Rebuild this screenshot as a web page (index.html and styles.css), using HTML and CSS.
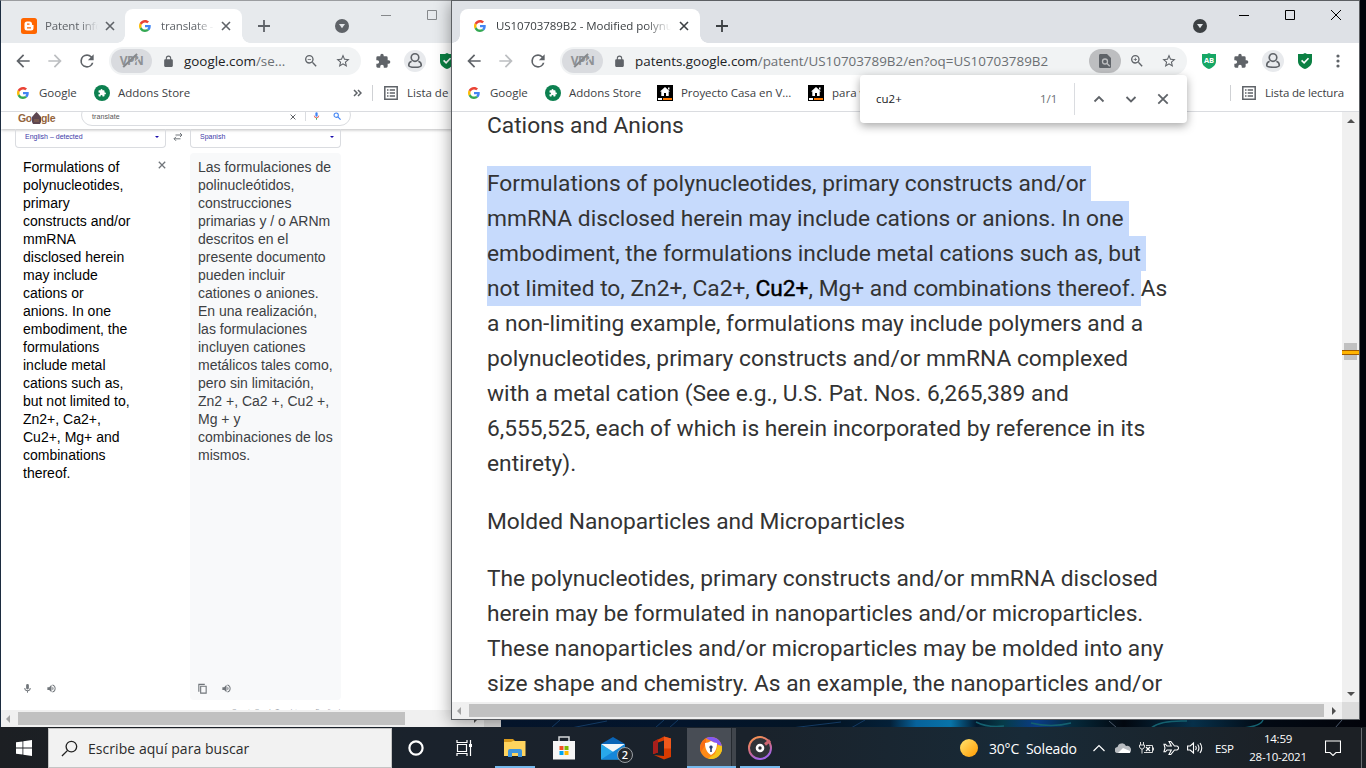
FILE: index.html
```html
<!DOCTYPE html>
<html lang="es">
<head>
    <meta charset="UTF-8">
    <meta name="viewport" content="width=device-width, initial-scale=1.0">
    <title>Escritorio</title>
    <link rel="stylesheet" href="styles.css">
</head>
<body>

    <!-- Iconos compartidos por las dos ventanas -->
    <svg class="sprite" width="0" height="0">
        <symbol id="g" viewBox="0 0 48 48">
            <path fill="#ea4335" d="M24 9.5c3.54 0 6.71 1.22 9.21 3.6l6.85-6.85C35.9 2.38 30.47 0 24 0 14.62 0 6.51 5.38 2.56 13.22l7.98 6.19C12.43 13.72 17.74 9.5 24 9.5z"/>
            <path fill="#4285f4" d="M46.98 24.55c0-1.57-.15-3.09-.38-4.55H24v9.02h12.94c-.58 2.96-2.26 5.48-4.78 7.18l7.73 6c4.51-4.18 7.09-10.36 7.09-17.65z"/>
            <path fill="#fbbc05" d="M10.53 28.59A14.5 14.5 0 0 1 9.77 24c0-1.6.27-3.14.76-4.59l-7.98-6.19A23.9 23.9 0 0 0 0 24c0 3.88.92 7.54 2.56 10.78l7.97-6.19z"/>
            <path fill="#34a853" d="M24 48c6.48 0 11.93-2.13 15.89-5.81l-7.73-6c-2.15 1.45-4.92 2.3-8.16 2.3-6.26 0-11.57-4.22-13.47-9.91l-7.98 6.19C6.51 42.62 14.62 48 24 48z"/>
        </symbol>
        <symbol id="x" viewBox="0 0 10 10"><path d="M1 1l8 8M9 1l-8 8" fill="none" stroke="currentColor" stroke-width="1.6"/></symbol>
        <symbol id="plus" viewBox="0 0 12 12"><path d="M6 0v12M0 6h12" fill="none" stroke="currentColor" stroke-width="1.8"/></symbol>
        <symbol id="drop" viewBox="0 0 14 14"><circle cx="7" cy="7" r="7" fill="currentColor"/><path d="M4 5h6L7 9.3z" fill="#e4e7ea"/></symbol>
        <symbol id="back" viewBox="0 0 24 24"><path fill="currentColor" d="M20 11H7.83l5.59-5.59L12 4l-8 8 8 8 1.41-1.41L7.83 13H20v-2z"/></symbol>
        <symbol id="forward" viewBox="0 0 24 24"><path fill="currentColor" d="M12 4l-1.41 1.41L16.17 11H4v2h12.17l-5.58 5.59L12 20l8-8z"/></symbol>
        <symbol id="reload" viewBox="0 0 24 24"><path fill="currentColor" d="M17.65 6.35A7.96 7.96 0 0 0 12 4a8 8 0 1 0 7.73 10h-2.08A6 6 0 1 1 12 6c1.66 0 3.14.69 4.22 1.78L13 11h7V4l-2.35 2.35z"/></symbol>
        <symbol id="lock" viewBox="0 0 24 24"><path fill="currentColor" d="M18 8h-1V6A5 5 0 0 0 7 6v2H6a2 2 0 0 0-2 2v10c0 1.1.9 2 2 2h12a2 2 0 0 0 2-2V10a2 2 0 0 0-2-2zm-9 0V6a3 3 0 0 1 6 0v2H9z"/></symbol>
        <symbol id="zoomout" viewBox="0 0 24 24"><path fill="currentColor" d="M15.5 14h-.79l-.28-.27A6.47 6.47 0 0 0 16 9.5 6.5 6.5 0 1 0 9.5 16c1.61 0 3.09-.59 4.23-1.57l.27.28v.79l5 4.99L20.49 19l-4.99-5zm-6 0a4.5 4.5 0 1 1 0-9 4.5 4.5 0 0 1 0 9zM7 9h5v1.2H7z"/></symbol>
        <symbol id="zoomin" viewBox="0 0 24 24"><path fill="currentColor" d="M15.5 14h-.79l-.28-.27A6.47 6.47 0 0 0 16 9.5 6.5 6.5 0 1 0 9.5 16c1.61 0 3.09-.59 4.23-1.57l.27.28v.79l5 4.99L20.49 19l-4.99-5zm-6 0a4.5 4.5 0 1 1 0-9 4.5 4.5 0 0 1 0 9zM10.1 7H8.9v1.9H7v1.2h1.9V12h1.2v-1.9H12V8.9h-1.9z"/></symbol>
        <symbol id="star" viewBox="0 0 24 24"><path fill="currentColor" d="M22 9.24l-7.19-.62L12 2 9.19 8.63 2 9.24l5.46 4.73L5.82 21 12 17.27 18.18 21l-1.63-7.03L22 9.24zM12 15.4l-3.76 2.27 1-4.28-3.32-2.88 4.38-.38L12 6.1l1.71 4.04 4.38.38-3.32 2.88 1 4.28L12 15.4z"/></symbol>
        <symbol id="puzzle" viewBox="0 0 24 24"><path fill="currentColor" d="M20.5 11H19V7a2 2 0 0 0-2-2h-4V3.5a2.5 2.5 0 0 0-5 0V5H4a2 2 0 0 0-2 2v3.8h1.5a2.7 2.7 0 0 1 0 5.4H2V20c0 1.1.9 2 2 2h3.8v-1.5a2.7 2.7 0 0 1 5.4 0V22H17a2 2 0 0 0 2-2v-4h1.5a2.5 2.5 0 0 0 0-5z"/></symbol>
        <symbol id="avatar" viewBox="0 0 22 22"><circle cx="11" cy="11" r="11" fill="#e8eaed"/><g fill="none" stroke="#5f6368" stroke-width="1.6"><circle cx="11" cy="7.6" r="3.8"/><path d="M7.6 11.2C5.3 12 4.7 13.6 4.7 15.3C4.7 17 6.2 17.3 11 17.3S17.3 17 17.3 15.3C17.3 13.6 16.7 12 14.4 11.2"/></g></symbol>
        <symbol id="shield" viewBox="0 0 14 16"><path fill="#0b8043" d="M7 0l2 1h5v7c0 4-3 6.5-7 8-4-1.5-7-4-7-8V1h5z"/><path d="M3.6 7.4l2.5 2.5 4.4-4.7" fill="none" stroke="#fff" stroke-width="1.6"/></symbol>
        <symbol id="addons" viewBox="0 0 16 16"><circle cx="8" cy="8" r="8" fill="#0d8050"/><use href="#puzzle" x="3.8" y="3.6" width="8.5" height="8.5" color="#fff"/></symbol>
        <symbol id="house" viewBox="0 0 16 16"><path d="M0 0h16v16H0z"/><path fill="#fff" d="M8 2l5 4.500h-1.300V11H9V8H7v3H4.300V6.500H3zM11 2.500h1.500v2H11zM1 13h4v2H1z"/><path fill="#ff7a00" d="M6 13h9v2H6z"/></symbol>
        <symbol id="list" viewBox="0 0 14 14"><path d="M.8.8h12.400v12.400H.8z" fill="none" stroke="currentColor" stroke-width="1.5"/><path d="M3 4h1.500M3 7h1.500M3 10h1.500M5.700 4H11M5.700 7H11M5.700 10H11" stroke="currentColor" stroke-width="1.4"/></symbol>
        <symbol id="mic" viewBox="0 0 24 24"><path fill="currentColor" d="M12 14a3 3 0 0 0 3-3V5a3 3 0 0 0-6 0v6a3 3 0 0 0 3 3zm5-3a5 5 0 0 1-10 0H5a7 7 0 0 0 6 6.92V21h2v-3.080A7 7 0 0 0 19 11h-2z"/></symbol>
        <symbol id="speaker" viewBox="0 0 24 24"><path fill="currentColor" d="M3 9v6h4l5 5V4L7 9H3zm13.500 3A4.500 4.500 0 0 0 14 7.970v8.050A4.470 4.470 0 0 0 16.500 12zM14 3.230v2.060a7 7 0 0 1 0 13.420v2.060a9 9 0 0 0 0-17.540z"/></symbol>
    </svg>

    <div class="desktop">

        <!-- Ventana izquierda: traductor -->
        <div class="window window-left">
            <div class="tabstrip">
                <div class="tab tab-idle">
                    <svg class="blogger" viewBox="0 0 16 16"><rect width="16" height="16" rx="2.5" fill="#ff6600"/><path d="M6 3.500h2.500a2.500 2.500 0 0 1 2.500 2.500c0 1 .2 1 1.500 1v3a2.500 2.500 0 0 1-2.500 2.500H6A2.500 2.500 0 0 1 3.500 10V6A2.500 2.500 0 0 1 6 3.500z" fill="#fff"/><path d="M6 6.200h2.500M6 9.800h4" stroke="#ff6600" stroke-width="1.3"/></svg>
                    <span class="tab-title">Patent info</span>
                    <svg class="tab-x"><use href="#x"/></svg>
                </div>
                <div class="tab tab-open">
                    <svg class="fav"><use href="#g"/></svg>
                    <span class="tab-title">translate -</span>
                    <svg class="tab-x"><use href="#x"/></svg>
                </div>
                <svg class="new-tab"><use href="#plus"/></svg>
                <svg class="tab-search"><use href="#drop"/></svg>
                <svg class="win-buttons" width="56" height="12" viewBox="0 0 56 12"><path d="M0 6.500h10M46.500 1.500h9v9h-9z" fill="none" stroke="currentColor"/></svg>
            </div>
            <div class="toolbar">
                <svg class="nav"><use href="#back"/></svg>
                <svg class="nav off"><use href="#forward"/></svg>
                <svg class="nav"><use href="#reload"/></svg>
                <div class="omnibox">
                    <span class="vpn">VPN</span>
                    <svg class="lock"><use href="#lock"/></svg>
                    <span class="url">google.com<i>/se...</i></span>
                    <svg class="act"><use href="#zoomout"/></svg>
                    <svg class="act"><use href="#star"/></svg>
                </div>
                <svg class="ext"><use href="#puzzle"/></svg>
                <svg class="avatar"><use href="#avatar"/></svg>
                <svg class="shield"><use href="#shield"/></svg>
            </div>
            <div class="bookmarks">
                <svg class="fav"><use href="#g"/></svg>
                <span class="bm-google">Google</span>
                <svg class="bm-icon"><use href="#addons"/></svg>
                <span class="bm-addons">Addons Store</span>
                <svg class="more" viewBox="0 0 9 8"><path d="M1 1l3 3-3 3M5 1l3 3-3 3"/></svg>
                <b class="divider"></b>
                <svg class="list"><use href="#list"/></svg>
                <span class="bm-list">Lista de lectura</span>
            </div>
            <div class="page translate">
                <div class="search-head">
                    <div class="doodle">Go<svg width="9" height="13" viewBox="0 0 9 13"><path d="M4.500 0l2 2 2.500 3v5l-1 2H1l-1-2V5l2.500-3z" fill="#5d4650"/><path d="M2 7h5v3H2z" fill="#77584f"/></svg>gle</div>
                    <div class="search-pill">
                        <span>translate</span>
                        <svg class="pill-x"><use href="#x"/></svg>
                        <svg class="pill-mic" viewBox="0 0 24 24"><rect x="9" y="2" width="6" height="12" rx="3" fill="#4285f4"/><path d="M6 11a6 6 0 0 0 12 0" fill="none" stroke="#ea4335" stroke-width="2"/><path d="M12 17v5" stroke="#34a853" stroke-width="2.5"/></svg>
                        <svg class="pill-find" viewBox="0 0 10 10"><circle cx="4" cy="4" r="2.7" fill="none" stroke="#4285f4" stroke-width="1.3"/><path d="M6 6l3.500 3.500" stroke="#4285f4" stroke-width="1.5"/></svg>
                    </div>
                </div>
                <div class="langs">
                    <div class="lang">English – detected<b></b></div>
                    <svg class="swap" viewBox="0 0 10 8"><path d="M2.500 2h6.500M7 0l2 2-2 2M7.500 5.800H1M3 3.800l-2 2 2 2" fill="none" stroke="#70757a"/></svg>
                    <div class="lang">Spanish<b></b></div>
                </div>
                <div class="panels">
                    <div class="panel source">
                        <div class="source-row">
                            <p>Formulations of<br>polynucleotides,<br>primary<br>constructs and/or<br>mmRNA<br>disclosed herein<br>may include<br>cations or<br>anions. In one<br>embodiment, the<br>formulations<br>include metal<br>cations such as,<br>but not limited to,<br>Zn2+, Ca2+,<br>Cu2+, Mg+ and<br>combinations<br>thereof.</p>
                            <svg class="clear"><use href="#x"/></svg>
                        </div>
                        <div class="panel-tools">
                            <svg><use href="#mic"/></svg>
                            <svg><use href="#speaker"/></svg>
                        </div>
                    </div>
                    <div class="panel result">
                        <p>Las formulaciones de<br>polinucleótidos,<br>construcciones<br>primarias y / o ARNm<br>descritos en el<br>presente documento<br>pueden incluir<br>cationes o aniones.<br>En una realización,<br>las formulaciones<br>incluyen cationes<br>metálicos tales como,<br>pero sin limitación,<br>Zn2 +, Ca2 +, Cu2 +,<br>Mg + y<br>combinaciones de los<br>mismos.</p>
                        <div class="panel-tools">
                            <svg viewBox="0 0 12 12"><path d="M2 9.500V1.500h6.500M4 3.500h6v7.500H4z" fill="none" stroke="currentColor" stroke-width="1.2"/></svg>
                            <svg><use href="#speaker"/></svg>
                        </div>
                    </div>
                </div>
                <div class="feedback"><span>Open in Google Translate</span><span>Feedback</span></div>
            </div>
            <div class="hscroll">
                <span class="arrow arrow-left"></span>
                <span class="thumb"></span>
                <span class="arrow arrow-right"></span>
                <span class="corner"></span>
            </div>
        </div>

        <!-- Ventana derecha: patente -->
        <div class="window window-right">
            <div class="tabstrip">
                <div class="tab tab-open">
                    <svg class="fav"><use href="#g"/></svg>
                    <span class="tab-title">US10703789B2 - Modified polynucleotides</span>
                    <svg class="tab-x"><use href="#x"/></svg>
                </div>
                <svg class="new-tab"><use href="#plus"/></svg>
                <svg class="tab-search"><use href="#drop"/></svg>
                <svg class="win-buttons" width="102" height="12" viewBox="0 0 102 12"><path d="M0 6.500h10M46.500 1.500h9v9h-9zM92 1l10 10M102 1L92 11" fill="none" stroke="currentColor"/></svg>
            </div>
            <div class="toolbar">
                <svg class="nav"><use href="#back"/></svg>
                <svg class="nav off"><use href="#forward"/></svg>
                <svg class="nav"><use href="#reload"/></svg>
                <div class="omnibox">
                    <span class="vpn">VPN</span>
                    <svg class="lock"><use href="#lock"/></svg>
                    <span class="url">patents.google.com<i>/patent/US10703789B2/en?oq=US10703789B2</i></span>
                    <span class="find-chip"><svg viewBox="0 0 12 14"><path fill="currentColor" d="M1.500 0H8l4 4v8.500c0 1-.5 1.500-1.500 1.500h-9C.5 14 0 13.500 0 12.500v-11C0 .5.5 0 1.500 0z"/><circle cx="6" cy="7.500" r="2.500" fill="none" stroke="#bdbec0" stroke-width="1.3"/><path d="M7.800 9.300l3 3" stroke="#bdbec0" stroke-width="1.3"/></svg></span>
                    <svg class="act"><use href="#zoomin"/></svg>
                    <svg class="act"><use href="#star"/></svg>
                </div>
                <span class="adblock"><svg viewBox="0 0 14 16"><path fill="#16a765" d="M7 0l2 1h5v7c0 4-3 6.500-7 8-4-1.500-7-4-7-8V1h5z"/></svg><b>AB</b></span>
                <svg class="ext"><use href="#puzzle"/></svg>
                <svg class="avatar"><use href="#avatar"/></svg>
                <svg class="shield"><use href="#shield"/></svg>
                <svg class="menu" viewBox="0 0 4 14"><circle cx="2" cy="2" r="1.6"/><circle cx="2" cy="7" r="1.6"/><circle cx="2" cy="12" r="1.6"/></svg>
            </div>
            <div class="bookmarks">
                <svg class="fav"><use href="#g"/></svg>
                <span class="bm-google">Google</span>
                <svg class="bm-icon"><use href="#addons"/></svg>
                <span class="bm-addons">Addons Store</span>
                <svg class="bm-icon"><use href="#house"/></svg>
                <span class="bm-casa">Proyecto Casa en V...</span>
                <svg class="bm-icon"><use href="#house"/></svg>
                <span>para v</span>
                <b class="divider"></b>
                <svg class="list"><use href="#list"/></svg>
                <span class="bm-list">Lista de lectura</span>
            </div>
            <div class="view">
                <div class="page patent">
                    <h2>Cations and Anions</h2>
                    <p>
                        <mark>Formulations of polynucleotides, primary constructs and/or</mark><br>
                        <mark>mmRNA disclosed herein may include cations or anions. In one</mark><br>
                        <mark>embodiment, the formulations include metal cations such as, but</mark><br>
                        <mark>not limited to, Zn2+, Ca2+, <b>Cu2+</b>, Mg+ and combinations thereof.</mark>As<br>
                        a non-limiting example, formulations may include polymers and a<br>
                        polynucleotides, primary constructs and/or mmRNA complexed<br>
                        with a metal cation (See e.g., U.S. Pat. Nos. 6,265,389 and<br>
                        6,555,525, each of which is herein incorporated by reference in its<br>
                        entirety).
                    </p>
                    <h2>Molded Nanoparticles and Microparticles</h2>
                    <p>
                        The polynucleotides, primary constructs and/or mmRNA disclosed<br>
                        herein may be formulated in nanoparticles and/or microparticles.<br>
                        These nanoparticles and/or microparticles may be molded into any<br>
                        size shape and chemistry. As an example, the nanoparticles and/or
                    </p>
                </div>
                <div class="vscroll">
                    <span class="arrow arrow-up"></span>
                    <span class="vthumb"></span>
                    <span class="arrow arrow-down"></span>
                </div>
            </div>
            <div class="hscroll">
                <span class="arrow arrow-left"></span>
                <span class="thumb"></span>
                <span class="arrow arrow-right"></span>
                <span class="corner"></span>
            </div>

            <!-- Barra de búsqueda en la página -->
            <div class="findbar">
                <span class="query">cu2+</span>
                <span class="count">1/1</span>
                <svg viewBox="0 0 12 12"><path d="M1.500 8.500L6 4l4.500 4.500"/></svg>
                <svg viewBox="0 0 12 12"><path d="M1.500 4L6 8.500 10.500 4"/></svg>
                <svg viewBox="0 0 12 12"><path d="M1.300 1.300l9.400 9.400M10.700 1.300l-9.400 9.400"/></svg>
            </div>
        </div>

        <!-- Fondo de pantalla visible bajo la ventana -->
        <svg class="wallpaper" width="865" height="8" viewBox="0 0 865 8">
            <defs><linearGradient id="wall">
                <stop offset="0" stop-color="#04142a"/><stop offset=".2" stop-color="#03152c"/><stop offset=".38" stop-color="#031424"/>
                <stop offset=".45" stop-color="#042038"/><stop offset=".48" stop-color="#07629b"/><stop offset=".52" stop-color="#0873a8"/><stop offset=".55" stop-color="#04182c"/>
                <stop offset=".58" stop-color="#063b48"/><stop offset=".62" stop-color="#0a3c86"/><stop offset=".66" stop-color="#052a3c"/>
                <stop offset=".72" stop-color="#02070f"/><stop offset=".8" stop-color="#06304a"/><stop offset=".88" stop-color="#020a14"/><stop offset="1" stop-color="#02030a"/>
            </linearGradient></defs>
            <rect width="865" height="8" fill="url(#wall)"/>
            <path d="M50 8l9-8M70 8l36-7M154 8l9-8M168 8l9-8M290 8l50-6M350 8l14-8" stroke="#143a62" fill="none"/>
            <path d="M475 2q12 6 28 4M530 3q20 5 40 0M650 8q10-8 36-7M742 8q18-2 20-8" stroke="#14606f" stroke-width="1.5" fill="none"/>
            <path d="M608 1l8 7M834 8l7-8" stroke="#4d5a6c"/>
        </svg>

        <!-- Barra de tareas -->
        <div class="taskbar">
            <div class="start"><svg viewBox="0 0 16 16"><path d="M0 2.300L6.500 1.400v6.200H0zM7.300 1.300L16 0v7.600H7.300zM0 8.400h6.500v6.200L0 13.700zM7.300 8.400H16V16l-8.700-1.300z" fill="#fff"/></svg></div>
            <div class="search">
                <svg viewBox="0 0 18 18"><circle cx="11" cy="7" r="5.6"/><path d="M7 11L1 17"/></svg>
                <span>Escribe aquí para buscar</span>
            </div>
            <div class="slot"><svg viewBox="0 0 16 16" width="16"><circle cx="8" cy="8" r="6.6" fill="none" stroke="#fff" stroke-width="2.2"/></svg></div>
            <div class="slot"><svg viewBox="0 0 17 16" width="17" height="16"><path d="M1 0v2.500h10V0M1 16v-2.500h10V16M1.500 4.500h9v7h-9zM14.500 0v16" fill="none" stroke="#fff" stroke-width="1.2"/><path d="M13 4h3v3h-3z" fill="#fff"/></svg></div>
            <div class="apps">
                <div class="app running"><svg width="22" height="20" viewBox="0 0 22 20"><path d="M0 1h9l2 2h10v4H0z" fill="#d99a1c"/><path d="M0 4h7l2-1h12.500v15H0z" fill="#ffd45e"/><path d="M4 19v-6q0-2 2-2h10q2 0 2 2v6h-4v-4H8v4z" fill="#3f95dc"/></svg></div>
                <div class="app"><svg width="24" height="26" viewBox="0 0 24 26"><path d="M7 8V2h10v6" fill="none" stroke="#d5d8da" stroke-width="1.5"/><path d="M1 6h22v18.500H1z" fill="#f5f5f5"/><path fill="#f25022" d="M7.500 11h4v4h-4z"/><path fill="#7fba00" d="M12.500 11h4v4h-4z"/><path fill="#00a4ef" d="M7.500 16h4v4h-4z"/><path fill="#ffb900" d="M12.500 16h4v4h-4z"/></svg></div>
                <div class="app mail"><svg width="24" height="23" viewBox="0 0 24 23"><path d="M0 7L12 0l12 7v5H0z" fill="#0a64b6"/><path d="M0 7h24L12 16z" fill="#f3f6f8"/><path d="M0 7l24 15.500H0z" fill="#28a8ea"/><path d="M24 7v15.500H0z" fill="#1687d9"/></svg><b>2</b></div>
                <div class="app"><svg width="18" height="24" viewBox="0 0 18 24"><path d="M0 6L11 .5l7 2v18.500l-7 2.500L1 19l10 1V4.500L5 6.500v10L0 18z" fill="#d83b01"/><path d="M0 6l5-3v13.500L0 18z" fill="#a91f1c"/><path d="M11 .5l7 2v10h-7z" fill="#f0591c"/></svg></div>
                <div class="app active"><svg width="22" height="22" viewBox="0 0 22 22"><circle cx="11" cy="11" r="11" fill="#ff8a16"/><path d="M6 1.200A11 11 0 0 1 22 10L17 7z" fill="#8459f5"/><path d="M22 9A11 11 0 0 1 8 21.600L15 17l3-9z" fill="#f4c51b"/><path d="M6 1.200A11 11 0 0 0 1 15l5-8z" fill="#f86d13"/><path d="M11 4q3 2 6 2c0 6-2 9.500-6 12-4-2.500-6-6-6-12q3 0 6-2z" fill="#fff"/><path d="M11 8.500a1.700 1.700 0 0 0-.8 3.200V15h1.600v-3.300a1.700 1.700 0 0 0-.8-3.200z" fill="#2c3f70"/></svg></div>
                <div class="app running"><svg width="24" height="24" viewBox="0 0 24 24"><defs><linearGradient id="ring" x1="0" y1="0" x2=".4" y2="1"><stop offset="0" stop-color="#ff9a4a"/><stop offset=".6" stop-color="#cf6a86"/><stop offset="1" stop-color="#a264e8"/></linearGradient></defs><circle cx="12" cy="12" r="11" fill="#303338" stroke="url(#ring)" stroke-width="2"/><path d="M17 8.500l5-4" stroke="#ce6570" stroke-width="3"/><circle cx="12" cy="12" r="3" fill="#303338" stroke="#fff" stroke-width="2.6"/></svg></div>
            </div>
            <div class="tray">
                <span class="sun"></span>
                <span class="weather">30°C&nbsp; Soleado</span>
                <svg class="t-up" viewBox="0 0 12 8"><path d="M.5 7L6 1.500 11.500 7" fill="none" stroke="#fff" stroke-width="1.2"/></svg>
                <svg class="t-icon" viewBox="0 0 16 12"><path d="M3 11a3 3 0 0 1-.5-6A4.500 4.500 0 0 1 11 4a3.700 3.700 0 0 1 2.500 7z" fill="#b8bcc0"/><path d="M3 11l5-5 7 3q1 2-1.500 2z" fill="#fff"/></svg>
                <svg class="t-icon" viewBox="0 0 16 12"><path d="M1.500 0v3M4.500 0v3M.5 3h5v2L4 7H2L.5 5zM3 7v4.500M5 10.500h8.500v-7H7" fill="none" stroke="#ddd"/><path d="M7 5l4 4M11 5L7 9" stroke="#fff" stroke-width="1.2"/><path d="M14.500 5.500v3" stroke="#ddd"/></svg>
                <svg class="t-icon" viewBox="0 0 16 14"><path d="M8.300 5L6 .5h1.800L11.500 5H14q1.500.5 1.500 2T14 9h-2.500L7.800 13.500H6L8.300 9H4L2.500 10.800H1L2 7 1 3.200h1.500L4 5z" fill="none" stroke="#fff" stroke-width="1.1"/></svg>
                <svg class="t-icon" viewBox="0 0 16 14"><path d="M.6 5h2.600L6.500 2v10L3.200 9H.6zM8.500 5q1.500 2 0 4M10.700 3.500q2.500 3.500 0 7M13 2q3.500 5 0 10" fill="none" stroke="#fff" stroke-width="1.1"/></svg>
                <span class="lang-id">ESP</span>
                <div class="clock"><span>14:59</span><span>28-10-2021</span></div>
                <svg class="notif" viewBox="0 0 16 16"><path d="M.5 1h15v11.500H11l-3 3-3-3H.5z" fill="none" stroke="#fff" stroke-width="1.1"/></svg>
            </div>
        </div>
    </div>

</body>
</html>
```
FILE: styles.css
```css
* {
    box-sizing: border-box;
    margin: 0;
    padding: 0;
}

body {
    overflow: hidden;
    font-family: "Open Sans", "Noto Sans", sans-serif;
    font-size: 11.5px;
    color: #3c4043;
}

svg {
    display: block;
    flex: none;
}

.sprite {
    position: absolute;
}

.desktop {
    position: relative;
    width: 1366px;
    height: 768px;
    background: #02040b;
    overflow: hidden;
}

/* Ventanas */
.window {
    position: absolute;
    top: 0;
    display: flex;
    flex-direction: column;
    background: #fff;
    white-space: nowrap;
}

.window-left {
    left: 0;
    width: 501px;
    height: 727px;
    border-left: 1px solid #1c2c40;
    border-top: 1px solid #9b9da0;
}

.window-right {
    left: 451px;
    width: 909px;
    height: 720px;
    border: 1px solid #5c5f63;
    box-shadow: 0 2px 16px rgba(0, 0, 0, 0.4);
}

/* Pestañas */
.tabstrip {
    display: flex;
    align-items: center;
    flex: none;
    height: 42px;
    padding: 8px 0 0 8px;
    background: #dee1e6;
    color: #3c4043;
}

.window-left .tabstrip {
    background: #e7eaed;
    color: #5f6368;
}

.tab {
    display: flex;
    align-items: center;
    height: 34px;
}

.tab-idle {
    width: 116px;
    padding-left: 12px;
}

.tab-open {
    position: relative;
    width: 240px;
    padding-left: 14px;
    background: #fff;
    border-radius: 8px 8px 0 0;
}

/* Curvas inferiores de la pestaña activa */
.tab-open::before,
.tab-open::after {
    content: "";
    position: absolute;
    bottom: 0;
    width: 8px;
    height: 8px;
}

.tab-open::before {
    left: -8px;
    background: radial-gradient(circle at 0 0, transparent 7.5px, #fff 8px);
}

.tab-open::after {
    right: -8px;
    background: radial-gradient(circle at 100% 0, transparent 7.5px, #fff 8px);
}

.window-left .tab-open {
    width: 117px;
}

.fav {
    width: 12px;
    height: 12px;
}

.blogger {
    width: 16px;
    height: 16px;
}

.tab-title {
    width: 175px;
    margin: -1px 0 0 10px;
    overflow: hidden;
    letter-spacing: -0.05px;
    -webkit-mask-image: linear-gradient(90deg, #000 calc(100% - 26px), transparent);
    mask-image: linear-gradient(90deg, #000 calc(100% - 26px), transparent);
}

.window-left .tab-title {
    width: 53px;
    letter-spacing: -0.15px;
    -webkit-mask-image: linear-gradient(90deg, #000 calc(100% - 18px), transparent);
    mask-image: linear-gradient(90deg, #000 calc(100% - 18px), transparent);
}

.tab-idle .tab-title {
    margin-left: 8px;
}

.tab-x {
    width: 10px;
    height: 10px;
    margin-left: 8px;
}

.window-left .tab-x {
    margin-left: 7px;
}

.new-tab {
    width: 12px;
    height: 12px;
    margin-left: 16px;
}

.tab-search {
    width: 14px;
    height: 14px;
    margin-left: 465px;
}

.window-left .tab-search {
    margin-left: 65px;
}

.win-buttons {
    margin: -22px 0 0 32px;
    color: #000;
}

.window-left .win-buttons {
    color: #85888b;
}

/* Barra de herramientas */
.toolbar {
    display: flex;
    align-items: center;
    flex: none;
    height: 32px;
    padding: 4px 0 0 12px;
    color: #5f6368;
}

.nav {
    width: 20px;
    height: 20px;
    margin-right: 12px;
}

.off {
    color: #bcbec1;
}

.omnibox {
    display: flex;
    align-items: center;
    flex: none;
    width: 627px;
    height: 28px;
    padding-left: 2px;
    border-radius: 14px;
    background: #f1f3f4;
}

.window-left .omnibox {
    width: 252px;
}

.vpn {
    position: relative;
    flex: none;
    width: 41px;
    height: 24px;
    border-radius: 12px;
    background: #d9dbdf;
    color: #8e9194;
    font-size: 12px;
    font-weight: 700;
    line-height: 24px;
    text-align: center;
    letter-spacing: -0.6px;
}

.vpn::after {
    content: "";
    position: absolute;
    left: 11px;
    top: 10px;
    width: 19px;
    height: 3px;
    border-top: 2px solid #85888b;
    border-bottom: 1px solid #d9dbdf;
    transform: rotate(-43deg);
}

.lock {
    width: 13px;
    height: 13px;
    margin: 0 9px 0 10px;
}

.url {
    flex: none;
    width: 454px;
    color: #202124;
    font-size: 13.4px;
}

.window-left .url {
    width: 119px;
}

.url i {
    color: #6b6f73;
    font-style: normal;
}

.act {
    width: 16px;
    height: 16px;
    margin-right: 16px;
}

.find-chip {
    flex: none;
    width: 32px;
    height: 24px;
    margin-right: 8px;
    padding: 5px 10px;
    border-radius: 12px;
    background: #bdbec0;
}

.find-chip svg {
    width: 12px;
    height: 14px;
}

.adblock {
    position: relative;
    width: 14px;
    margin-left: 15px;
}

.adblock b {
    position: absolute;
    top: 2px;
    left: 0;
    width: 14px;
    color: #fff;
    font-size: 7.5px;
    line-height: 10px;
    text-align: center;
}

.ext {
    width: 16px;
    height: 16px;
    margin: 0 13px 0 14px;
}

.adblock + .ext {
    margin-left: 17px;
}

.avatar {
    width: 22px;
    height: 22px;
}

.shield {
    width: 14px;
    height: 16px;
    margin-left: 14px;
}

.menu {
    width: 4px;
    height: 14px;
    margin-left: 24px;
    fill: #5f6368;
}

/* Marcadores */
.bookmarks {
    display: flex;
    align-items: center;
    flex: none;
    height: 37px;
    padding-left: 16px;
    border-bottom: 1px solid #dadce0;
}

.bookmarks span {
    flex: none;
    margin-bottom: 2px;
}

.bookmarks .fav {
    margin-right: 10px;
}

.bm-google {
    width: 55px;
}

.bm-icon {
    width: 16px;
    height: 16px;
    margin-right: 8px;
}

.bm-addons {
    width: 88px;
}

.bm-casa {
    width: 127px;
    letter-spacing: -0.05px;
}

.more {
    width: 9px;
    height: 8px;
    margin: 0 10px 0 147px;
    fill: none;
    stroke: #5f6368;
    stroke-width: 1.5;
}

.divider {
    flex: none;
    width: 1px;
    height: 16px;
    background: #cfd1d4;
}

.list {
    width: 14px;
    height: 14px;
    margin: 0 9px 0 11px;
    color: #5f6368;
}

.window-right .divider {
    margin-left: auto;
}

.window-right .bm-list {
    width: 94px;
    letter-spacing: -0.15px;
}

/* Traductor */
.page {
    flex: 1;
    min-height: 0;
    overflow: hidden;
}

.translate {
    display: flex;
    flex-direction: column;
    font-family: "Liberation Sans", Arial, sans-serif;
    color: #000;
}

.search-head {
    display: flex;
    flex: none;
    height: 17px;
    padding-left: 17px;
    box-shadow: 0 1px 3px rgba(60, 64, 67, 0.35);
}

.doodle {
    display: flex;
    width: 63px;
    height: 14px;
    color: #94653d;
    font-size: 10.5px;
    font-weight: 700;
    line-height: 12px;
    letter-spacing: -0.3px;
}

.search-pill {
    display: flex;
    align-items: flex-end;
    width: 270px;
    height: 22px;
    margin-top: -8px;
    padding: 0 0 4px 10px;
    border: 1px solid #dadce0;
    border-radius: 11px;
    font-size: 7px;
    line-height: 9px;
    color: #555;
}

.search-pill span {
    width: 198px;
    letter-spacing: 0.1px;
}

.pill-x {
    width: 6px;
    height: 6px;
    margin: 0 8px 1px 0;
    color: #55595e;
}

.pill-mic {
    width: 16px;
    height: 10px;
    padding-left: 6px;
    margin-left: 1px;
    border-left: 1px solid #dadce0;
}

.pill-find {
    width: 8px;
    height: 8px;
    margin: 0 0 1px 12px;
}

.langs {
    display: flex;
    flex: none;
    height: 19px;
    padding-left: 14px;
}

.lang {
    display: flex;
    justify-content: space-between;
    align-items: center;
    width: 151px;
    padding: 0 6px 3px 9px;
    border: 1px solid #dadce0;
    border-top: 0;
    border-radius: 0 0 4px 4px;
    color: #3d3aa8;
    font-size: 7px;
}

.lang b {
    border: 2.5px solid transparent;
    border-top-color: #1a0dab;
    border-bottom: 0;
}

.swap {
    width: 10px;
    height: 8px;
    margin: 4px 7px 0;
}

.panels {
    display: flex;
    gap: 24px;
    flex: none;
    height: 547px;
    margin-top: 5px;
    padding-left: 14px;
    font-size: 14px;
    line-height: 18px;
}

.panel {
    display: flex;
    flex-direction: column;
    justify-content: space-between;
    width: 151px;
    padding: 5px 0 6px 8px;
    border-radius: 4px;
}

.result {
    background: #f8f9fa;
    color: #3c4043;
}

.source-row {
    display: flex;
    justify-content: space-between;
}

.clear {
    width: 8px;
    height: 8px;
    margin: 3px 0 0;
    color: #70757a;
}

.panel-tools {
    display: flex;
    gap: 13px;
    margin-left: -1.5px;
    color: #70757a;
}

.panel-tools svg {
    width: 11px;
    height: 11px;
}

.feedback {
    display: flex;
    gap: 15px;
    margin: 7px 0 0 231px;
    color: #9aa0a6;
    font-size: 6px;
    line-height: 8px;
}

/* Barras de desplazamiento */
.hscroll {
    display: flex;
    align-items: center;
    flex: none;
    height: 17px;
    background: #f0f0f0;
}

.thumb {
    width: 387px;
    height: 13px;
    background: #c1c1c1;
}

.window-right .thumb {
    width: 855px;
}

.arrow {
    border: 4px solid transparent;
}

.arrow-left {
    margin: 0 8px 0 1px;
    border-right-color: #a3a3a3;
}

.arrow-right {
    margin-left: 8px;
    border-left-color: #505050;
}

.window-left .arrow-right {
    margin-left: 69px;
}

.corner {
    align-self: stretch;
    width: 17px;
    margin-left: auto;
    background: #dcdcdc;
}

.view {
    display: flex;
    flex: 1;
    min-height: 0;
}

.vscroll {
    display: flex;
    flex-direction: column;
    align-items: center;
    width: 17px;
    background: #f0f0f0;
}

.arrow-up {
    margin-top: 3px;
    border-bottom-color: #505050;
}

.arrow-down {
    margin: auto 0 2px;
    border-top-color: #505050;
}

.vthumb {
    position: relative;
    width: 13px;
    height: 17px;
    margin-top: 220px;
    background: #c1c1c1;
}

/* Marca de coincidencia sobre la barra */
.vthumb::after {
    content: "";
    position: absolute;
    left: -2px;
    top: 7px;
    width: 17px;
    height: 3px;
    background: #ffb400;
    border: solid #a05a00;
    border-width: 1px 0;
}

/* Texto de la patente */
.patent {
    padding-left: 35px;
    font-family: Roboto, sans-serif;
    font-size: 22.75px;
    line-height: 35px;
    color: #333;
}

.patent h2 {
    margin: -4px 0 22.5px;
    font-size: inherit;
    font-weight: 400;
}

.patent p + h2 {
    margin-top: 23px;
    margin-bottom: 22px;
}

.patent mark {
    display: inline-block;
    height: 35px;
    padding-right: 5px;
    vertical-align: top;
    background: #c6dafc;
    color: #333;
}

.patent mark b {
    color: #000;
    font-weight: 400;
    -webkit-text-stroke: 0.4px #000;
}

/* Buscar en la página */
.findbar {
    position: absolute;
    left: 408px;
    top: 74px;
    display: flex;
    align-items: center;
    width: 327px;
    height: 48px;
    padding-left: 16px;
    border-radius: 4px;
    background: #fff;
    box-shadow: 0 3px 10px rgba(0, 0, 0, 0.35);
    color: #202124;
}

.query {
    width: 164px;
    margin-bottom: 2px;
}

.count {
    width: 35px;
    height: 32px;
    margin-right: 18px;
    border-right: 1px solid #dadce0;
    line-height: 31px;
    color: #6b6f73;
}

.findbar svg {
    width: 12px;
    height: 12px;
    margin-right: 20px;
    fill: none;
    stroke: #5f6368;
    stroke-width: 1.8;
}

.findbar svg:last-child {
    margin-right: 0;
}

.wallpaper {
    position: absolute;
    left: 501px;
    top: 720px;
}

/* Barra de tareas */
.taskbar {
    position: absolute;
    left: 0;
    top: 727px;
    display: flex;
    width: 1366px;
    height: 41px;
    padding-top: 1px;
    background: linear-gradient(90deg, #1c1f23, #1a222c 30%, #1a222b 55%, #182a37 75%, #1c2025 95%);
    color: #fff;
    white-space: nowrap;
}

.start {
    width: 48px;
    padding: 12px 16px;
}

.start svg {
    width: 16px;
    height: 16px;
}

.search {
    display: flex;
    align-items: center;
    width: 344px;
    padding-left: 12px;
    border: 1px solid #c4c4c4;
    background: #f2f2f2;
    color: #2b2b2b;
    font-size: 14px;
    letter-spacing: 0.05px;
}

.search svg {
    width: 17px;
    height: 17px;
    margin-right: 10px;
    fill: none;
    stroke: #222;
    stroke-width: 1.4;
}

.slot {
    display: flex;
    align-items: center;
    justify-content: center;
    width: 48px;
}

.apps {
    display: flex;
    margin-left: 3px;
}

.app {
    position: relative;
    display: flex;
    align-items: center;
    justify-content: center;
    width: 49px;
    padding-right: 2px;
}

.running::after {
    content: "";
    position: absolute;
    left: 4px;
    bottom: 0;
    width: 40px;
    height: 2px;
    background: #76b9ed;
}

.active {
    background: linear-gradient(90deg, #484d55 44px, #24292f 44px, #24292f 45px, #40454c 45px);
    border-bottom: 2px solid #76b9ed;
    padding-top: 2px;
}

.mail b {
    position: absolute;
    left: 28px;
    top: 19px;
    width: 16px;
    height: 16px;
    border: 1px solid #9a9fa4;
    border-radius: 50%;
    background: #24282d;
    font-size: 11px;
    font-weight: 600;
    line-height: 14px;
    text-align: center;
}

.tray {
    display: flex;
    align-items: center;
    margin-left: auto;
    height: 40px;
    border-right: 1px solid #6a6e72;
    margin-right: 4px;
}

.sun {
    width: 18px;
    height: 18px;
    margin-right: 11px;
    border-radius: 50%;
    background: linear-gradient(135deg, #ffe470, #ff9a00);
}

.weather {
    width: 104px;
    font-size: 14px;
    letter-spacing: -0.2px;
}

.t-up {
    width: 12px;
    height: 8px;
    margin-right: 10px;
}

.t-icon {
    width: 16px;
    height: 14px;
    margin-right: 8px;
}

.lang-id {
    width: 28px;
    margin-left: 4px;
    font-size: 11.5px;
    letter-spacing: -0.4px;
}

.clock {
    display: flex;
    flex-direction: column;
    align-items: center;
    width: 70px;
    font-size: 11.5px;
    line-height: 18px;
    letter-spacing: -0.25px;
}

.notif {
    width: 16px;
    height: 16px;
    margin: 0 20px 0 12px;
}
```
